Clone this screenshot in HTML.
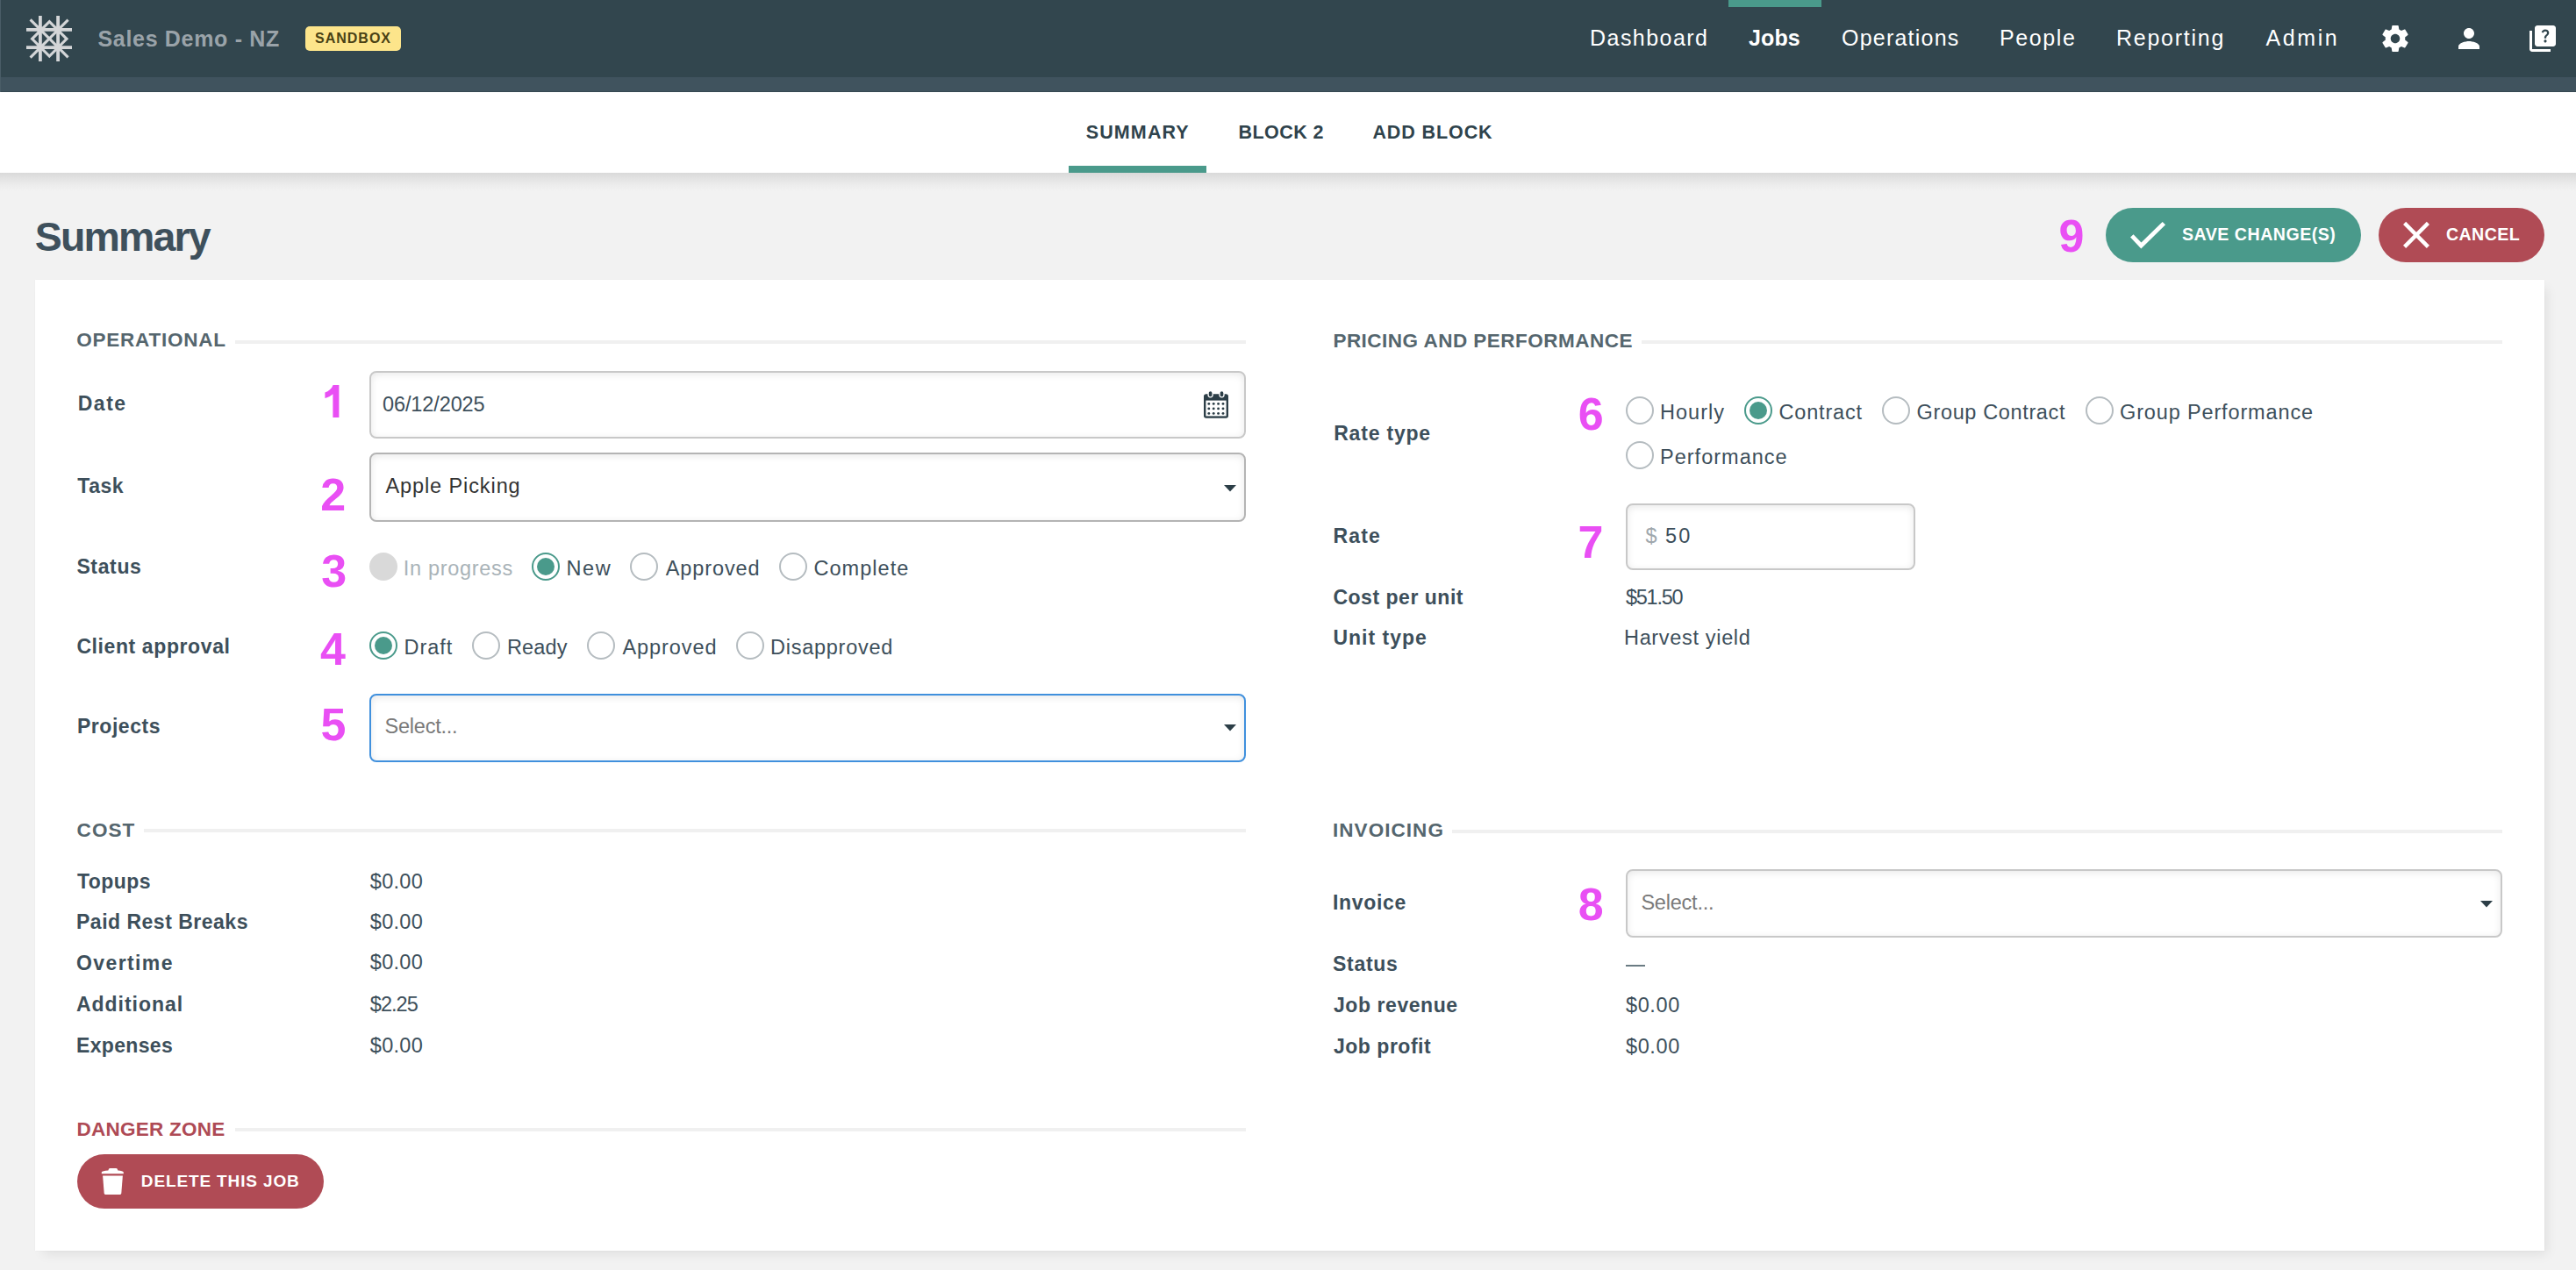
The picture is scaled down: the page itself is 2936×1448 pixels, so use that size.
<!DOCTYPE html><html><head><meta charset="utf-8"><style>
html,body{margin:0;padding:0;width:2936px;height:1448px;overflow:hidden;background:#f2f2f2;font-family:'Liberation Sans',sans-serif}
</style></head><body>
<div style="position:absolute;left:0px;top:0px;width:2936px;height:88px;background:#32464e"></div>
<div style="position:absolute;left:0px;top:88px;width:2936px;height:17px;background:#40535e"></div>
<div style="position:absolute;left:0px;top:104px;width:2936px;height:1px;background:#364852"></div>
<div style="position:absolute;left:0px;top:0px;width:1px;height:105px;background:#4a5d67"></div>
<div style="position:absolute;left:1970px;top:0px;width:106px;height:8px;background:#4a9a8b"></div>
<svg style="position:absolute;left:30px;top:18px" width="52" height="52" viewBox="0 0 52 52">
<g stroke="#d4d6d8" stroke-width="3.8" fill="none">
<line x1="15.9" y1="0" x2="15.9" y2="52"/><line x1="36.1" y1="0" x2="36.1" y2="52"/>
<line x1="0" y1="15.9" x2="52" y2="15.9"/><line x1="0" y1="36.1" x2="52" y2="36.1"/>
</g><g stroke="#d4d6d8" stroke-width="3.1" fill="none">
<line x1="4.6" y1="4.4" x2="47.6" y2="47.4"/><line x1="47.6" y1="4.6" x2="4.6" y2="47.6"/>
<path d="M26.3 6.6 L46 26.3 L26.3 46 L6.6 26.3 Z" stroke-linejoin="miter"/>
</g>
<g fill="#d4d6d8"><circle cx="15.9" cy="15.9" r="3.7"/><circle cx="36.1" cy="15.9" r="3.7"/><circle cx="15.9" cy="36.1" r="3.7"/><circle cx="36.1" cy="36.1" r="3.7"/></g>
</svg>
<div style="position:absolute;left:348px;top:30px;width:109px;height:28px;background:#fde58b;border-radius:5px"></div>
<svg style="position:absolute;left:2712.4px;top:25.7px" width="36" height="36" viewBox="0 0 24 24"><path fill="#fff" d="M19.43 12.98c.04-.32.07-.64.07-.98s-.03-.66-.07-.98l2.11-1.65c.19-.15.24-.42.12-.64l-2-3.46c-.12-.22-.39-.3-.61-.22l-2.49 1c-.52-.4-1.08-.73-1.69-.98l-.38-2.65C14.46 2.180 14.25 2 14 2h-4c-.25 0-.46.18-.49.42l-.38 2.650c-.61.25-1.17.59-1.69.98l-2.49-1c-.23-.09-.49 0-.61.22l-2 3.46c-.13.22-.07.49.12.64l2.11 1.65c-.04.32-.07.65-.07.98s.03.66.07.98l-2.11 1.65c-.19.15-.24.42-.12.64l2 3.46c.12.22.39.3.61.22l2.49-1c.52.4 1.08.73 1.69.98l.38 2.65c.03.24.24.42.49.42h4c.25 0 .46-.18.49-.42l.38-2.65c.61-.25 1.17-.59 1.69-.98l2.49 1c.23.09.49 0 .61-.22l2-3.46c.12-.22.07-.49-.12-.64l-2.11-1.65zM12 15.5c-1.93 0-3.5-1.57-3.5-3.5s1.57-3.5 3.5-3.5 3.5 1.57 3.5 3.5-1.57 3.5-3.5 3.5z"/></svg>
<svg style="position:absolute;left:2796px;top:26px" width="36" height="36" viewBox="0 0 24 24"><path fill="#fff" d="M12 12c2.21 0 4-1.79 4-4s-1.79-4-4-4-4 1.79-4 4 1.79 4 4 4zm0 2c-2.67 0-8 1.34-8 4v2h16v-2c0-2.66-5.33-4-8-4z"/></svg>
<svg style="position:absolute;left:2879.8px;top:25.9px" width="36" height="36" viewBox="0 0 24 24"><path fill="#fff" d="M4 6H2v14c0 1.1.9 2 2 2h14v-2H4V6zm16-4H8c-1.1 0-2 .9-2 2v12c0 1.1.9 2 2 2h12c1.1 0 2-.9 2-2V4c0-1.1-.9-2-2-2zm-5.99 13c-.59 0-1.05-.47-1.05-1.05 0-.59.47-1.04 1.05-1.04.59 0 1.04.45 1.04 1.04-.01.58-.45 1.05-1.040 1.05zm2.5-6.17c-.63.93-1.23 1.21-1.56 1.81-.13.24-.18.4-.18 1.18h-1.52c0-.41-.06-1.08.26-1.65.41-.73 1.18-1.16 1.63-1.8.48-.68.21-1.94-1.14-1.94-.88 0-1.32.67-1.5 1.23l-1.37-.57C11.51 5.960 12.52 5 13.99 5c1.23 0 2.08.56 2.51 1.26.37.61.58 1.73.01 2.57z"/></svg>
<div style="position:absolute;left:0px;top:197px;width:2936px;height:21px;background:linear-gradient(#d9d9d9,#e4e4e4 35%,#ececec 65%,#f2f2f2)"></div>
<div style="position:absolute;left:0px;top:105px;width:2936px;height:92px;background:#fff"></div>
<div style="position:absolute;left:1218px;top:189px;width:157px;height:8px;background:#4a9a8b"></div>
<div style="position:absolute;left:2400px;top:237px;width:291px;height:62px;background:#4a9a8b;border-radius:31px"></div>
<svg style="position:absolute;left:2420px;top:245px" width="56" height="46" viewBox="0 0 56 46"><polyline points="9.8,23.8 20.4,35 46.4,9.6" fill="none" stroke="#fff" stroke-width="4.8" stroke-linejoin="miter" stroke-miterlimit="10"/></svg>
<div style="position:absolute;left:2711px;top:237px;width:189px;height:62px;background:#b04b55;border-radius:31px"></div>
<svg style="position:absolute;left:2734px;top:248px" width="40" height="40" viewBox="0 0 40 40"><g stroke="#fff" stroke-width="4.4"><line x1="6.6" y1="6.4" x2="33.4" y2="33.4"/><line x1="33.4" y1="6.4" x2="6.6" y2="33.4"/></g></svg>
<div style="position:absolute;left:40px;top:319px;width:2860px;height:1107px;background:#fff;box-shadow:0 0 1.5px rgba(0,0,0,0.05),6px 7px 12px -3px rgba(0,0,0,0.08)"></div>
<div style="position:absolute;left:268px;top:388px;width:1152px;height:4px;background:#f0f0f0"></div>
<div style="position:absolute;left:1871px;top:388px;width:981px;height:4px;background:#f0f0f0"></div>
<div style="position:absolute;left:164px;top:945px;width:1256px;height:4px;background:#f0f0f0"></div>
<div style="position:absolute;left:1655px;top:945.5px;width:1197px;height:4px;background:#f0f0f0"></div>
<div style="position:absolute;left:268px;top:1286px;width:1152px;height:4px;background:#f0f0f0"></div>
<div style="position:absolute;left:421px;top:423px;width:999px;height:77px;background:#fff;box-sizing:border-box;border-radius:8px;box-shadow:inset 0 2px 8px rgba(0,0,0,0.095);border:2px solid #c8c8c8"></div>
<div style="position:absolute;left:421px;top:516px;width:999px;height:79px;background:#fff;box-sizing:border-box;border-radius:8px;box-shadow:inset 0 2px 8px rgba(0,0,0,0.095);border:2px solid #b4b4b4"></div>
<div style="position:absolute;left:421px;top:790.5px;width:999px;height:78px;background:#fff;box-sizing:border-box;border-radius:8px;box-shadow:inset 0 2px 8px rgba(0,0,0,0.095);border:2px solid #4090dd"></div>
<div style="position:absolute;left:1853px;top:574px;width:330px;height:76px;background:#fff;box-sizing:border-box;border-radius:8px;box-shadow:inset 0 2px 8px rgba(0,0,0,0.095);border:2px solid #c8c8c8"></div>
<div style="position:absolute;left:1853px;top:991px;width:999px;height:78px;background:#fff;box-sizing:border-box;border-radius:8px;box-shadow:inset 0 2px 8px rgba(0,0,0,0.095);border:2px solid #c8c8c8"></div>
<svg style="position:absolute;left:1395px;top:552.5px" width="14" height="8" viewBox="0 0 14 8"><path d="M0 0H14L7 7.5Z" fill="#2c3e47"/></svg>
<svg style="position:absolute;left:1395px;top:826px" width="14" height="8" viewBox="0 0 14 8"><path d="M0 0H14L7 7.5Z" fill="#2c3e47"/></svg>
<svg style="position:absolute;left:2827px;top:1026.7px" width="14" height="8" viewBox="0 0 14 8"><path d="M0 0H14L7 7.5Z" fill="#2c3e47"/></svg>
<svg style="position:absolute;left:1371px;top:445px" width="30" height="33" viewBox="0 0 30 33">
<rect x="1" y="4.2" width="28" height="27.6" rx="2.8" fill="#2c3e47"/>
<rect x="3.4" y="11.6" width="23.2" height="17.8" fill="#fff"/>
<g fill="#2c3e47">
<circle cx="6.8" cy="15.4" r="1.45"/><circle cx="12.2" cy="15.4" r="1.45"/><circle cx="17.6" cy="15.4" r="1.45"/><circle cx="23" cy="15.4" r="1.45"/>
<circle cx="6.8" cy="20.9" r="1.45"/><circle cx="12.2" cy="20.9" r="1.45"/><circle cx="17.6" cy="20.9" r="1.45"/><circle cx="23" cy="20.9" r="1.45"/>
<circle cx="6.8" cy="26.4" r="1.45"/><circle cx="12.2" cy="26.4" r="1.45"/><circle cx="17.6" cy="26.4" r="1.45"/><circle cx="23" cy="26.4" r="1.45"/>
</g>
<g fill="#2c3e47" stroke="#fff" stroke-width="1.3"><rect x="6.1" y="0.65" width="5" height="7.2" rx="2.5"/><rect x="19" y="0.65" width="5" height="7.2" rx="2.5"/></g>
</svg>
<div style="position:absolute;left:421px;top:630px;width:32px;height:32px;border-radius:50%;background:#d9d9d9"></div>
<div style="position:absolute;left:606px;top:630px;width:32px;height:32px;border-radius:50%;box-sizing:border-box;border:2px solid #4a9a8b;background:#fff"></div>
<div style="position:absolute;left:612px;top:636px;width:20px;height:20px;border-radius:50%;background:#4a9a8b"></div>
<div style="position:absolute;left:718px;top:630px;width:32px;height:32px;border-radius:50%;box-sizing:border-box;border:2.5px solid #b5bcc0;background:#fff"></div>
<div style="position:absolute;left:887.8px;top:630px;width:32px;height:32px;border-radius:50%;box-sizing:border-box;border:2.5px solid #b5bcc0;background:#fff"></div>
<div style="position:absolute;left:421px;top:719.7px;width:32px;height:32px;border-radius:50%;box-sizing:border-box;border:2px solid #4a9a8b;background:#fff"></div>
<div style="position:absolute;left:427px;top:725.7px;width:20px;height:20px;border-radius:50%;background:#4a9a8b"></div>
<div style="position:absolute;left:538px;top:719.7px;width:32px;height:32px;border-radius:50%;box-sizing:border-box;border:2.5px solid #b5bcc0;background:#fff"></div>
<div style="position:absolute;left:669px;top:719.7px;width:32px;height:32px;border-radius:50%;box-sizing:border-box;border:2.5px solid #b5bcc0;background:#fff"></div>
<div style="position:absolute;left:838.7px;top:719.7px;width:32px;height:32px;border-radius:50%;box-sizing:border-box;border:2.5px solid #b5bcc0;background:#fff"></div>
<div style="position:absolute;left:1853px;top:452px;width:32px;height:32px;border-radius:50%;box-sizing:border-box;border:2.5px solid #b5bcc0;background:#fff"></div>
<div style="position:absolute;left:1988px;top:452px;width:32px;height:32px;border-radius:50%;box-sizing:border-box;border:2px solid #4a9a8b;background:#fff"></div>
<div style="position:absolute;left:1994px;top:458px;width:20px;height:20px;border-radius:50%;background:#4a9a8b"></div>
<div style="position:absolute;left:2145px;top:452px;width:32px;height:32px;border-radius:50%;box-sizing:border-box;border:2.5px solid #b5bcc0;background:#fff"></div>
<div style="position:absolute;left:2377px;top:452px;width:32px;height:32px;border-radius:50%;box-sizing:border-box;border:2.5px solid #b5bcc0;background:#fff"></div>
<div style="position:absolute;left:1853px;top:502.9px;width:32px;height:32px;border-radius:50%;box-sizing:border-box;border:2.5px solid #b5bcc0;background:#fff"></div>
<div style="position:absolute;left:1853px;top:1100px;width:22px;height:2px;background:#6a7b83"></div>
<div style="position:absolute;left:88px;top:1316px;width:281px;height:62px;background:#b04b55;border-radius:31px"></div>
<svg style="position:absolute;left:114px;top:1330px" width="30" height="34" viewBox="0 0 30 34">
<path d="M9.4 4.6 C9.8 2.8 10.4 2 11.4 2 H18.4 C19.3 2 19.9 2.8 20.4 4.6 C24 4.9 26.4 5.6 26.8 6.6 V8.2 H1.8 V6.6 C2.2 5.6 4.8 4.9 9.4 4.6 Z" fill="#fff"/>
<path d="M3.1 10.6 H25.9 L24.3 30.6 C24.2 31.4 23.7 32 22.9 32 H6.1 C5.3 32 4.8 31.4 4.7 30.6 Z" fill="#fff"/>
</svg>
<div id="h_title" style="position:absolute;left:111.50px;top:32.33px;font:700 25px/25px 'Liberation Sans', sans-serif;color:#9aa3a9;letter-spacing:0.679px;white-space:pre">Sales Demo - NZ</div>
<div id="badge_t" style="position:absolute;left:359.00px;top:35.95px;font:700 16px/16px 'Liberation Sans', sans-serif;color:#4a4215;letter-spacing:1.000px;white-space:pre">SANDBOX</div>
<div id="nav1" style="position:absolute;left:1812.00px;top:31.03px;font:400 25px/25px 'Liberation Sans', sans-serif;color:#ffffff;letter-spacing:1.463px;white-space:pre">Dashboard</div>
<div id="nav2" style="position:absolute;left:1993.00px;top:31.03px;font:700 25px/25px 'Liberation Sans', sans-serif;color:#ffffff;letter-spacing:0.133px;white-space:pre">Jobs</div>
<div id="nav3" style="position:absolute;left:2099.00px;top:31.03px;font:400 25px/25px 'Liberation Sans', sans-serif;color:#ffffff;letter-spacing:1.222px;white-space:pre">Operations</div>
<div id="nav4" style="position:absolute;left:2279.00px;top:31.03px;font:400 25px/25px 'Liberation Sans', sans-serif;color:#ffffff;letter-spacing:1.600px;white-space:pre">People</div>
<div id="nav5" style="position:absolute;left:2412.00px;top:31.03px;font:400 25px/25px 'Liberation Sans', sans-serif;color:#ffffff;letter-spacing:1.750px;white-space:pre">Reporting</div>
<div id="nav6" style="position:absolute;left:2582.50px;top:31.03px;font:400 25px/25px 'Liberation Sans', sans-serif;color:#ffffff;letter-spacing:2.575px;white-space:pre">Admin</div>
<div id="tab1" style="position:absolute;left:1237.80px;top:140.50px;font:700 21.5px/21.5px 'Liberation Sans', sans-serif;color:#2f434c;letter-spacing:1.100px;white-space:pre">SUMMARY</div>
<div id="tab2" style="position:absolute;left:1411.40px;top:140.50px;font:700 21.5px/21.5px 'Liberation Sans', sans-serif;color:#2f434c;letter-spacing:0.467px;white-space:pre">BLOCK 2</div>
<div id="tab3" style="position:absolute;left:1564.40px;top:140.50px;font:700 21.5px/21.5px 'Liberation Sans', sans-serif;color:#2f434c;letter-spacing:0.900px;white-space:pre">ADD BLOCK</div>
<div id="title" style="position:absolute;left:39.70px;top:247.43px;font:700 46.5px/46.5px 'Liberation Sans', sans-serif;color:#3e505c;letter-spacing:-1.817px;white-space:pre">Summary</div>
<div id="save_t" style="position:absolute;left:2487.00px;top:258.40px;font:700 19.6px/19.6px 'Liberation Sans', sans-serif;color:#ffffff;letter-spacing:0.500px;white-space:pre">SAVE CHANGE(S)</div>
<div id="cancel_t" style="position:absolute;left:2788.00px;top:258.40px;font:700 19.6px/19.6px 'Liberation Sans', sans-serif;color:#ffffff;letter-spacing:0.400px;white-space:pre">CANCEL</div>
<div id="del_t" style="position:absolute;left:160.80px;top:1337.41px;font:700 19px/19px 'Liberation Sans', sans-serif;color:#ffffff;letter-spacing:0.871px;white-space:pre">DELETE THIS JOB</div>
<div id="sec1" style="position:absolute;left:87.20px;top:377.45px;font:700 22.5px/22.5px 'Liberation Sans', sans-serif;color:#55666e;letter-spacing:0.780px;white-space:pre">OPERATIONAL</div>
<div id="sec2" style="position:absolute;left:1519.40px;top:377.55px;font:700 22.5px/22.5px 'Liberation Sans', sans-serif;color:#55666e;letter-spacing:0.482px;white-space:pre">PRICING AND PERFORMANCE</div>
<div id="sec3" style="position:absolute;left:87.60px;top:935.75px;font:700 22.5px/22.5px 'Liberation Sans', sans-serif;color:#55666e;letter-spacing:1.033px;white-space:pre">COST</div>
<div id="sec4" style="position:absolute;left:1519.00px;top:936.15px;font:700 22.5px/22.5px 'Liberation Sans', sans-serif;color:#55666e;letter-spacing:1.050px;white-space:pre">INVOICING</div>
<div id="sec5" style="position:absolute;left:87.50px;top:1276.65px;font:700 22.5px/22.5px 'Liberation Sans', sans-serif;color:#ae4a55;letter-spacing:0.250px;white-space:pre">DANGER ZONE</div>
<div id="l_date" style="position:absolute;left:88.70px;top:449.13px;font:700 23px/23px 'Liberation Sans', sans-serif;color:#3d4f5b;letter-spacing:1.533px;white-space:pre">Date</div>
<div id="l_task" style="position:absolute;left:88.30px;top:542.83px;font:700 23px/23px 'Liberation Sans', sans-serif;color:#3d4f5b;letter-spacing:0.500px;white-space:pre">Task</div>
<div id="l_status" style="position:absolute;left:87.40px;top:635.33px;font:700 23px/23px 'Liberation Sans', sans-serif;color:#3d4f5b;letter-spacing:0.640px;white-space:pre">Status</div>
<div id="l_client" style="position:absolute;left:87.40px;top:725.63px;font:700 23px/23px 'Liberation Sans', sans-serif;color:#3d4f5b;letter-spacing:0.600px;white-space:pre">Client approval</div>
<div id="l_projects" style="position:absolute;left:88.00px;top:816.83px;font:700 23px/23px 'Liberation Sans', sans-serif;color:#3d4f5b;letter-spacing:0.529px;white-space:pre">Projects</div>
<div id="l_topups" style="position:absolute;left:88.00px;top:994.03px;font:700 23px/23px 'Liberation Sans', sans-serif;color:#3d4f5b;letter-spacing:0.440px;white-space:pre">Topups</div>
<div id="l_paid" style="position:absolute;left:87.00px;top:1040.03px;font:700 23px/23px 'Liberation Sans', sans-serif;color:#3d4f5b;letter-spacing:0.500px;white-space:pre">Paid Rest Breaks</div>
<div id="l_overtime" style="position:absolute;left:87.00px;top:1086.83px;font:700 23px/23px 'Liberation Sans', sans-serif;color:#3d4f5b;letter-spacing:1.400px;white-space:pre">Overtime</div>
<div id="l_additional" style="position:absolute;left:87.00px;top:1134.03px;font:700 23px/23px 'Liberation Sans', sans-serif;color:#3d4f5b;letter-spacing:0.967px;white-space:pre">Additional</div>
<div id="l_expenses" style="position:absolute;left:87.00px;top:1181.03px;font:700 23px/23px 'Liberation Sans', sans-serif;color:#3d4f5b;letter-spacing:0.343px;white-space:pre">Expenses</div>
<div id="l_ratetype" style="position:absolute;left:1520.20px;top:482.83px;font:700 23px/23px 'Liberation Sans', sans-serif;color:#3d4f5b;letter-spacing:0.800px;white-space:pre">Rate type</div>
<div id="l_rate" style="position:absolute;left:1519.40px;top:600.03px;font:700 23px/23px 'Liberation Sans', sans-serif;color:#3d4f5b;letter-spacing:1.200px;white-space:pre">Rate</div>
<div id="l_cpu" style="position:absolute;left:1519.40px;top:670.03px;font:700 23px/23px 'Liberation Sans', sans-serif;color:#3d4f5b;letter-spacing:0.525px;white-space:pre">Cost per unit</div>
<div id="l_unittype" style="position:absolute;left:1519.40px;top:716.33px;font:700 23px/23px 'Liberation Sans', sans-serif;color:#3d4f5b;letter-spacing:1.012px;white-space:pre">Unit type</div>
<div id="l_invoice" style="position:absolute;left:1519.00px;top:1018.03px;font:700 23px/23px 'Liberation Sans', sans-serif;color:#3d4f5b;letter-spacing:0.667px;white-space:pre">Invoice</div>
<div id="l_istatus" style="position:absolute;left:1519.00px;top:1088.03px;font:700 23px/23px 'Liberation Sans', sans-serif;color:#3d4f5b;letter-spacing:0.720px;white-space:pre">Status</div>
<div id="l_rev" style="position:absolute;left:1520.00px;top:1134.93px;font:700 23px/23px 'Liberation Sans', sans-serif;color:#3d4f5b;letter-spacing:0.560px;white-space:pre">Job revenue</div>
<div id="l_profit" style="position:absolute;left:1520.00px;top:1182.03px;font:700 23px/23px 'Liberation Sans', sans-serif;color:#3d4f5b;letter-spacing:0.511px;white-space:pre">Job profit</div>
<div id="v_topups" style="position:absolute;left:421.80px;top:993.60px;font:400 23.5px/23.5px 'Liberation Sans', sans-serif;color:#3d4f5b;letter-spacing:0.275px;white-space:pre">$0.00</div>
<div id="v_paid" style="position:absolute;left:421.80px;top:1039.60px;font:400 23.5px/23.5px 'Liberation Sans', sans-serif;color:#3d4f5b;letter-spacing:0.275px;white-space:pre">$0.00</div>
<div id="v_overtime" style="position:absolute;left:421.80px;top:1086.40px;font:400 23.5px/23.5px 'Liberation Sans', sans-serif;color:#3d4f5b;letter-spacing:0.275px;white-space:pre">$0.00</div>
<div id="v_additional" style="position:absolute;left:421.80px;top:1133.60px;font:400 23.5px/23.5px 'Liberation Sans', sans-serif;color:#3d4f5b;letter-spacing:-0.950px;white-space:pre">$2.25</div>
<div id="v_expenses" style="position:absolute;left:421.80px;top:1180.60px;font:400 23.5px/23.5px 'Liberation Sans', sans-serif;color:#3d4f5b;letter-spacing:0.275px;white-space:pre">$0.00</div>
<div id="v_cpu" style="position:absolute;left:1853.00px;top:669.60px;font:400 23.5px/23.5px 'Liberation Sans', sans-serif;color:#3d4f5b;letter-spacing:-1.260px;white-space:pre">$51.50</div>
<div id="v_unittype" style="position:absolute;left:1851.00px;top:715.90px;font:400 23.5px/23.5px 'Liberation Sans', sans-serif;color:#3d4f5b;letter-spacing:0.667px;white-space:pre">Harvest yield</div>
<div id="v_rev" style="position:absolute;left:1853.00px;top:1134.50px;font:400 23.5px/23.5px 'Liberation Sans', sans-serif;color:#3d4f5b;letter-spacing:0.600px;white-space:pre">$0.00</div>
<div id="v_profit" style="position:absolute;left:1853.00px;top:1181.60px;font:400 23.5px/23.5px 'Liberation Sans', sans-serif;color:#3d4f5b;letter-spacing:0.600px;white-space:pre">$0.00</div>
<div id="i_date" style="position:absolute;left:436.00px;top:450.00px;font:400 23.5px/23.5px 'Liberation Sans', sans-serif;color:#3d4f5b;letter-spacing:-0.111px;white-space:pre">06/12/2025</div>
<div id="i_task" style="position:absolute;left:439.40px;top:543.00px;font:400 23.5px/23.5px 'Liberation Sans', sans-serif;color:#333333;letter-spacing:0.908px;white-space:pre">Apple Picking</div>
<div id="i_proj" style="position:absolute;left:438.60px;top:816.90px;font:400 23.5px/23.5px 'Liberation Sans', sans-serif;color:#7a7a7a;letter-spacing:-0.250px;white-space:pre">Select...</div>
<div id="i_inv" style="position:absolute;left:1870.40px;top:1018.00px;font:400 23.5px/23.5px 'Liberation Sans', sans-serif;color:#7a7a7a;letter-spacing:-0.213px;white-space:pre">Select...</div>
<div id="i_dollar" style="position:absolute;left:1875.50px;top:600.40px;font:400 23.5px/23.5px 'Liberation Sans', sans-serif;color:#9fa8ad;letter-spacing:0.000px;white-space:pre">$</div>
<div id="i_rate" style="position:absolute;left:1898.00px;top:600.40px;font:400 23.5px/23.5px 'Liberation Sans', sans-serif;color:#3d4f5b;letter-spacing:2.300px;white-space:pre">50</div>
<div id="r_inprog" style="position:absolute;left:459.80px;top:636.60px;font:400 23.5px/23.5px 'Liberation Sans', sans-serif;color:#a9b3b8;letter-spacing:0.680px;white-space:pre">In progress</div>
<div id="r_new" style="position:absolute;left:645.50px;top:636.60px;font:400 23.5px/23.5px 'Liberation Sans', sans-serif;color:#3d4f5b;letter-spacing:1.650px;white-space:pre">New</div>
<div id="r_appr" style="position:absolute;left:758.80px;top:636.60px;font:400 23.5px/23.5px 'Liberation Sans', sans-serif;color:#3d4f5b;letter-spacing:0.886px;white-space:pre">Approved</div>
<div id="r_compl" style="position:absolute;left:927.40px;top:636.60px;font:400 23.5px/23.5px 'Liberation Sans', sans-serif;color:#3d4f5b;letter-spacing:1.057px;white-space:pre">Complete</div>
<div id="r_draft" style="position:absolute;left:460.50px;top:726.50px;font:400 23.5px/23.5px 'Liberation Sans', sans-serif;color:#3d4f5b;letter-spacing:0.975px;white-space:pre">Draft</div>
<div id="r_ready" style="position:absolute;left:578.00px;top:726.50px;font:400 23.5px/23.5px 'Liberation Sans', sans-serif;color:#3d4f5b;letter-spacing:0.125px;white-space:pre">Ready</div>
<div id="r_appr2" style="position:absolute;left:709.50px;top:726.50px;font:400 23.5px/23.5px 'Liberation Sans', sans-serif;color:#3d4f5b;letter-spacing:0.929px;white-space:pre">Approved</div>
<div id="r_disappr" style="position:absolute;left:878.00px;top:726.50px;font:400 23.5px/23.5px 'Liberation Sans', sans-serif;color:#3d4f5b;letter-spacing:0.740px;white-space:pre">Disapproved</div>
<div id="r_hourly" style="position:absolute;left:1892.00px;top:459.30px;font:400 23.5px/23.5px 'Liberation Sans', sans-serif;color:#3d4f5b;letter-spacing:1.040px;white-space:pre">Hourly</div>
<div id="r_contract" style="position:absolute;left:2027.50px;top:459.30px;font:400 23.5px/23.5px 'Liberation Sans', sans-serif;color:#3d4f5b;letter-spacing:0.829px;white-space:pre">Contract</div>
<div id="r_gcontract" style="position:absolute;left:2184.60px;top:459.30px;font:400 23.5px/23.5px 'Liberation Sans', sans-serif;color:#3d4f5b;letter-spacing:0.631px;white-space:pre">Group Contract</div>
<div id="r_gperf" style="position:absolute;left:2416.00px;top:459.30px;font:400 23.5px/23.5px 'Liberation Sans', sans-serif;color:#3d4f5b;letter-spacing:0.856px;white-space:pre">Group Performance</div>
<div id="r_perf" style="position:absolute;left:1892.00px;top:509.60px;font:400 23.5px/23.5px 'Liberation Sans', sans-serif;color:#3d4f5b;letter-spacing:1.010px;white-space:pre">Performance</div>
<div id="n9" style="position:absolute;left:2346.50px;top:242.97px;font:700 52px/52px 'Liberation Sans', sans-serif;color:#e94ff4;letter-spacing:0.000px;white-space:pre">9</div>
<svg id="n1" style="position:absolute;left:369.8px;top:438.6px" width="18" height="38" viewBox="0 0 18 38"><path d="M9.6 0 H16.4 V37 H9.4 V10.2 C7.2 12.4 3.6 14.2 0.4 15 V8.4 C4.6 7.2 8 4.2 9.6 0 Z" fill="#e94ff4"/></svg>
<div id="n2" style="position:absolute;left:365.30px;top:537.97px;font:700 52px/52px 'Liberation Sans', sans-serif;color:#e94ff4;letter-spacing:0.000px;white-space:pre">2</div>
<div id="n3" style="position:absolute;left:366.30px;top:624.67px;font:700 52px/52px 'Liberation Sans', sans-serif;color:#e94ff4;letter-spacing:0.000px;white-space:pre">3</div>
<div id="n4" style="position:absolute;left:365.00px;top:713.97px;font:700 52px/52px 'Liberation Sans', sans-serif;color:#e94ff4;letter-spacing:0.000px;white-space:pre">4</div>
<div id="n5" style="position:absolute;left:365.50px;top:800.47px;font:700 52px/52px 'Liberation Sans', sans-serif;color:#e94ff4;letter-spacing:0.000px;white-space:pre">5</div>
<div id="n6" style="position:absolute;left:1798.65px;top:446.47px;font:700 52px/52px 'Liberation Sans', sans-serif;color:#e94ff4;letter-spacing:0.000px;white-space:pre">6</div>
<div id="n7" style="position:absolute;left:1798.55px;top:591.77px;font:700 52px/52px 'Liberation Sans', sans-serif;color:#e94ff4;letter-spacing:0.000px;white-space:pre">7</div>
<div id="n8" style="position:absolute;left:1798.85px;top:1004.77px;font:700 52px/52px 'Liberation Sans', sans-serif;color:#e94ff4;letter-spacing:0.000px;white-space:pre">8</div>
</body></html>
